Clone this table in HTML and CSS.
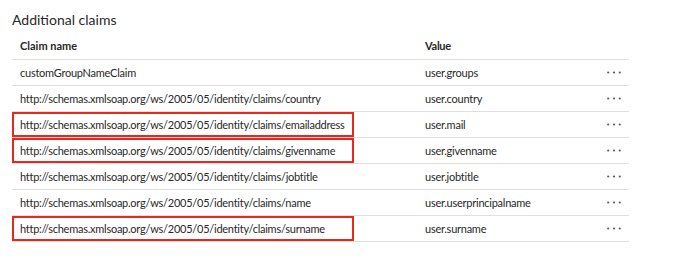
FILE: index.html
```html
<!DOCTYPE html>
<html>
<head>
<meta charset="utf-8">
<link rel="stylesheet" href="styles.css">
</head>
<body>
<div class="page">
  <h2 class="title">Additional claims</h2>
  <div class="table">
    <div class="row head">
      <div class="cell name">Claim name</div>
      <div class="cell value">Value</div>
      <div class="cell act"></div>
    </div>
    <div class="row">
      <div class="cell name"><span class="txt">customGroupNameClaim</span></div>
      <div class="cell value">user.groups</div>
      <div class="cell act"><svg class="dots" width="14" height="3" viewBox="0 0 14 3"><circle cx="1.2" cy="1.5" r="1.1"/><circle cx="7" cy="1.5" r="1.1"/><circle cx="12.8" cy="1.5" r="1.1"/></svg></div>
    </div>
    <div class="row">
      <div class="cell name"><span class="txt">http://schemas.xmlsoap.org/ws/2005/05/identity/claims/country</span></div>
      <div class="cell value">user.country</div>
      <div class="cell act"><svg class="dots" width="14" height="3" viewBox="0 0 14 3"><circle cx="1.2" cy="1.5" r="1.1"/><circle cx="7" cy="1.5" r="1.1"/><circle cx="12.8" cy="1.5" r="1.1"/></svg></div>
    </div>
    <div class="row">
      <div class="cell name"><span class="txt hl">http://schemas.xmlsoap.org/ws/2005/05/identity/claims/emailaddress</span></div>
      <div class="cell value">user.mail</div>
      <div class="cell act"><svg class="dots" width="14" height="3" viewBox="0 0 14 3"><circle cx="1.2" cy="1.5" r="1.1"/><circle cx="7" cy="1.5" r="1.1"/><circle cx="12.8" cy="1.5" r="1.1"/></svg></div>
    </div>
    <div class="row">
      <div class="cell name"><span class="txt hl">http://schemas.xmlsoap.org/ws/2005/05/identity/claims/givenname</span></div>
      <div class="cell value">user.givenname</div>
      <div class="cell act"><svg class="dots" width="14" height="3" viewBox="0 0 14 3"><circle cx="1.2" cy="1.5" r="1.1"/><circle cx="7" cy="1.5" r="1.1"/><circle cx="12.8" cy="1.5" r="1.1"/></svg></div>
    </div>
    <div class="row">
      <div class="cell name"><span class="txt">http://schemas.xmlsoap.org/ws/2005/05/identity/claims/jobtitle</span></div>
      <div class="cell value">user.jobtitle</div>
      <div class="cell act"><svg class="dots" width="14" height="3" viewBox="0 0 14 3"><circle cx="1.2" cy="1.5" r="1.1"/><circle cx="7" cy="1.5" r="1.1"/><circle cx="12.8" cy="1.5" r="1.1"/></svg></div>
    </div>
    <div class="row">
      <div class="cell name"><span class="txt">http://schemas.xmlsoap.org/ws/2005/05/identity/claims/name</span></div>
      <div class="cell value">user.userprincipalname</div>
      <div class="cell act"><svg class="dots" width="14" height="3" viewBox="0 0 14 3"><circle cx="1.2" cy="1.5" r="1.1"/><circle cx="7" cy="1.5" r="1.1"/><circle cx="12.8" cy="1.5" r="1.1"/></svg></div>
    </div>
    <div class="row">
      <div class="cell name"><span class="txt hl">http://schemas.xmlsoap.org/ws/2005/05/identity/claims/surname</span></div>
      <div class="cell value">user.surname</div>
      <div class="cell act"><svg class="dots" width="14" height="3" viewBox="0 0 14 3"><circle cx="1.2" cy="1.5" r="1.1"/><circle cx="7" cy="1.5" r="1.1"/><circle cx="12.8" cy="1.5" r="1.1"/></svg></div>
    </div>
  </div>
</div>
</body>
</html>
```
FILE: styles.css
```css
html, body {
  margin: 0;
  padding: 0;
  background: #ffffff;
}
body {
  font-family: "Lato", "Open Sans", sans-serif;
  color: #292827;
  font-size: 11px;
}
.page {
  padding: 10px 0 0 12px;
}
.title {
  margin: 0 0 1px 0;
  font-size: 14px;
  font-weight: 400;
  line-height: 20px;
}
.table {
  width: 617px;
}
.row {
  display: grid;
  grid-template-columns: 405px 1fr 29px;
  height: 25px;
  border-bottom: 1px solid #e1dfdd;
}
.row.head {
  height: 28px;
  font-weight: 700;
}
.cell {
  display: flex;
  align-items: center;
  white-space: nowrap;
}
.name .txt,
.value {
  letter-spacing: -0.25px;
}
.head .name {
  padding-left: 8px;
}
.value {
  padding-left: 8px;
}
.txt {
  display: flex;
  align-items: center;
  height: 100%;
  padding: 0 10px 0 8px;
}
.txt.hl {
  box-sizing: border-box;
  width: 342px;
  outline: 2px solid #e8281c;
  outline-offset: -2px;
}
.act {
  justify-content: flex-start;
  padding-left: 7px;
}
.dots {
  fill: #605e5c;
}
```
